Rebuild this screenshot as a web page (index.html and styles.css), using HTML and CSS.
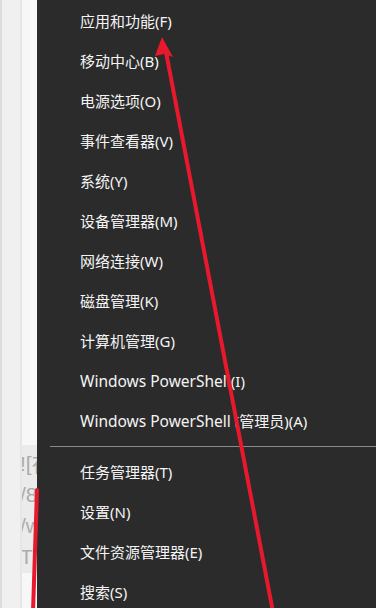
FILE: index.html
```html
<!DOCTYPE html>
<html lang="zh-CN">
<head>
    <meta charset="UTF-8">
    <meta name="viewport" content="width=device-width, initial-scale=1.0">
    <title>Win+X 菜单</title>
    <link rel="stylesheet" href="styles.css">
</head>
<body>

<div class="screen">
    <div class="editor-strip">
        <div class="gutter"></div>
        <div class="editor">
            <div class="code-block">
                <div>![在</div>
                <div>/8</div>
                <div>/w</div>
                <div>T</div>
            </div>
        </div>
    </div>

    <ul class="context-menu">
        <li>应用和功能(F)</li>
        <li>移动中心(B)</li>
        <li>电源选项(O)</li>
        <li>事件查看器(V)</li>
        <li>系统(Y)</li>
        <li>设备管理器(M)</li>
        <li>网络连接(W)</li>
        <li>磁盘管理(K)</li>
        <li>计算机管理(G)</li>
        <li><span class="latin">Windows PowerShell</span>(I)</li>
        <li><span class="latin">Windows PowerShell</span> (管理员)(A)</li>
        <li class="separator"></li>
        <li>任务管理器(T)</li>
        <li>设置(N)</li>
        <li>文件资源管理器(E)</li>
        <li>搜索(S)</li>
    </ul>

    <!-- annotation arrows drawn over the screenshot -->
    <svg class="arrows" width="376" height="608" viewBox="0 0 376 608">
        <line x1="166" y1="52" x2="273" y2="612" stroke="#e8192c" stroke-width="4"/>
        <polygon points="162,37 173,57 164,54 155,56" fill="#e8192c"/>
        <line x1="37" y1="490" x2="33" y2="612" stroke="#e8192c" stroke-width="4" stroke-linecap="round"/>
    </svg>
</div>

</body>
</html>
```

FILE: styles.css
```css
/* Global */
body {
    margin: 0;
    font-family: 'Noto Sans', 'Noto Sans CJK SC', sans-serif;
    background-color: #2b2b2b;
}

.screen {
    position: relative;
    display: flex;
    width: 376px;
    height: 608px;
    overflow: hidden;
}

/* Left: the editor behind the menu */
.editor-strip {
    display: flex;
    width: 37px;
    flex-shrink: 0;
    background-color: #f0f0f0;
    border-left: 2px solid #dcdcdc;
    box-sizing: border-box;
}

.gutter {
    width: 18px;
    flex-shrink: 0;
    border-right: 2px solid #e6e6e6;
}

.editor {
    flex: 1;
    background-color: #f7f7f7;
    padding-top: 445px;
    overflow: hidden;
}

.code-block {
    background-color: #ebebeb;
    height: 128px;
    color: #acacac;
    font-family: 'Liberation Sans', 'Noto Sans CJK SC', sans-serif;
    font-size: 21px;
    line-height: 31px;
    white-space: nowrap;
    padding-top: 3px;
    box-sizing: border-box;
    margin-left: -2px;
}

/* Win+X menu */
.context-menu {
    flex: 1;
    list-style: none;
    margin: 0;
    padding: 1px 0 0;
    background-color: #2b2b2b;
    color: #f4f4f4;
}

.context-menu li {
    height: 40px;
    line-height: 40px;
    padding-left: 43px;
    font-size: 15px;
    white-space: nowrap;
}

.context-menu .latin {
    font-size: 15.5px;
}

.context-menu li.separator {
    height: 1px;
    margin: 5px 0 5px 13px;
    padding: 0;
    background-color: #8a8a8a;
}

.arrows {
    position: absolute;
    top: 0;
    left: 0;
    pointer-events: none;
}
```
